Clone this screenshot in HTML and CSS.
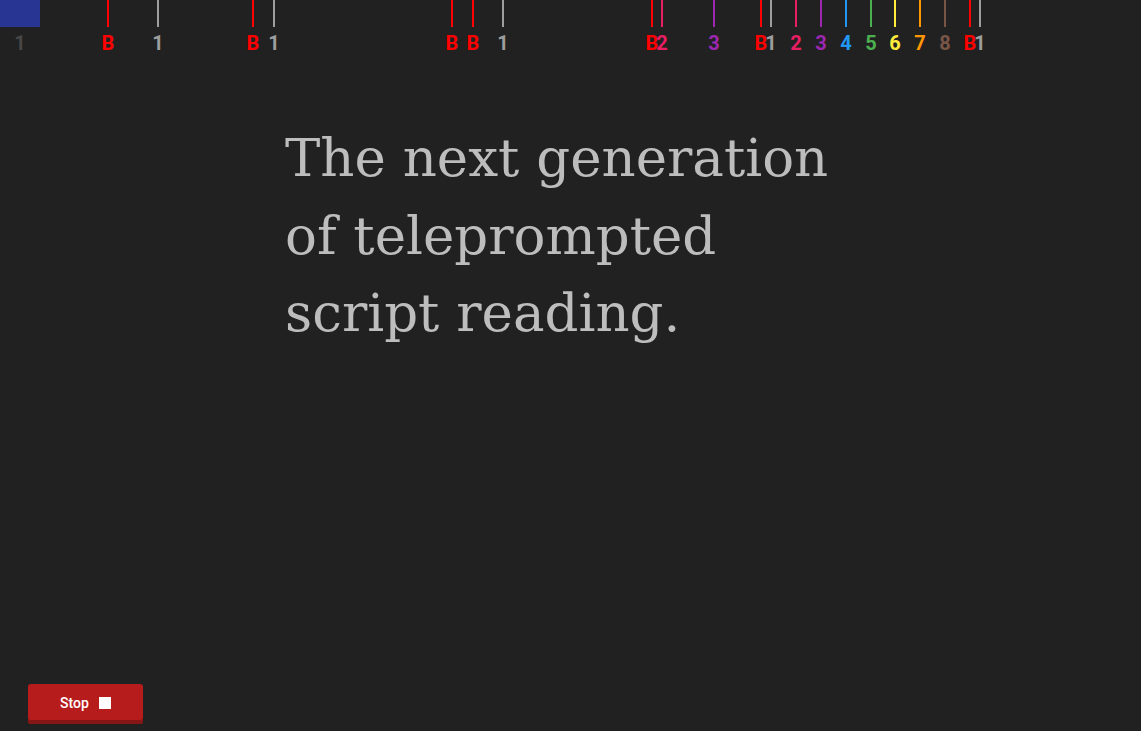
FILE: index.html
```html
<!DOCTYPE html>
<html>
<head>
<meta charset="utf-8">
<link rel="stylesheet" href="styles.css">
</head>
<body>
<div class="page">
  <div class="timeline">
    <div class="progress"></div>
    <div class="mark m-dim" style="left:20px"><span class="tick"></span><span class="lbl">1</span></div>
    <div class="mark m-red" style="left:108px"><span class="tick"></span><span class="lbl">B</span></div>
    <div class="mark m-grey" style="left:158px"><span class="tick"></span><span class="lbl">1</span></div>
    <div class="mark m-red" style="left:253px"><span class="tick"></span><span class="lbl">B</span></div>
    <div class="mark m-grey" style="left:274px"><span class="tick"></span><span class="lbl">1</span></div>
    <div class="mark m-red" style="left:452px"><span class="tick"></span><span class="lbl">B</span></div>
    <div class="mark m-red" style="left:473px"><span class="tick"></span><span class="lbl">B</span></div>
    <div class="mark m-grey" style="left:503px"><span class="tick"></span><span class="lbl">1</span></div>
    <div class="mark m-red" style="left:652px"><span class="tick"></span><span class="lbl">B</span></div>
    <div class="mark m-pink" style="left:662px"><span class="tick"></span><span class="lbl">2</span></div>
    <div class="mark m-purple" style="left:714px"><span class="tick"></span><span class="lbl">3</span></div>
    <div class="mark m-red" style="left:761px"><span class="tick"></span><span class="lbl">B</span></div>
    <div class="mark m-grey" style="left:771px"><span class="tick"></span><span class="lbl">1</span></div>
    <div class="mark m-pink" style="left:796px"><span class="tick"></span><span class="lbl">2</span></div>
    <div class="mark m-purple" style="left:821px"><span class="tick"></span><span class="lbl">3</span></div>
    <div class="mark m-blue" style="left:846px"><span class="tick"></span><span class="lbl">4</span></div>
    <div class="mark m-green" style="left:871px"><span class="tick"></span><span class="lbl">5</span></div>
    <div class="mark m-yellow" style="left:895px"><span class="tick"></span><span class="lbl">6</span></div>
    <div class="mark m-orange" style="left:920px"><span class="tick"></span><span class="lbl">7</span></div>
    <div class="mark m-brown" style="left:945px"><span class="tick"></span><span class="lbl">8</span></div>
    <div class="mark m-red" style="left:970px"><span class="tick"></span><span class="lbl">B</span></div>
    <div class="mark m-grey" style="left:980px"><span class="tick"></span><span class="lbl">1</span></div>
  </div>
  <main class="script">
    <p class="script-text">The next generation<br>of teleprompted<br>script reading.</p>
  </main>
  <footer class="controls">
    <button class="stop-btn">Stop <span class="stop-icon"></span></button>
  </footer>
</div>
</body>
</html>
```

FILE: styles.css
```css
html, body {
  margin: 0;
  padding: 0;
  background: #212121;
  height: 100%;
  overflow: hidden;
}
.page {
  height: 100vh;
  display: flex;
  flex-direction: column;
  font-family: Roboto, "Liberation Sans", sans-serif;
}
.timeline {
  position: relative;
  height: 60px;
  flex: none;
}
.progress {
  width: 40px;
  height: 27px;
  background: #283593;
}
.mark {
  position: absolute;
  top: 0;
  width: 0;
}
.tick {
  position: absolute;
  left: -1px;
  top: 0;
  width: 2px;
  height: 27px;
  background: currentColor;
}
.m-dim .tick { display: none; }
.lbl {
  position: absolute;
  top: 31px;
  left: -10px;
  width: 20px;
  text-align: center;
  font-weight: 700;
  font-size: 20px;
  line-height: 24px;
}
.m-dim { color: #474747; }
.m-red { color: #ff0000; }
.m-grey { color: #9e9e9e; }
.m-pink { color: #e91e63; }
.m-purple { color: #9c27b0; }
.m-blue { color: #2196f3; }
.m-green { color: #4caf50; }
.m-yellow { color: #ffeb3b; }
.m-orange { color: #ff9800; }
.m-brown { color: #795548; }

.script {
  flex: 1;
  padding-left: 285px;
}
.script-text {
  margin: 59px 0 0;
  font-family: "DejaVu Serif", "Liberation Serif", serif;
  font-size: 53px;
  line-height: 77.5px;
  color: #bdbdbd;
}
.controls {
  flex: none;
  padding: 0 0 7px 28px;
}
.stop-btn {
  display: flex;
  align-items: center;
  justify-content: center;
  gap: 10px;
  width: 115px;
  height: 40px;
  border: 0;
  border-radius: 3px;
  background: #b71c1c;
  box-shadow: inset 0 -4px 0 #861515;
  color: #fff;
  font-family: Roboto, "Liberation Sans", sans-serif;
  font-weight: 500;
  font-size: 14px;
  padding: 0 0 3px;
}
.stop-icon {
  width: 12px;
  height: 12px;
  background: #fff;
}
```
